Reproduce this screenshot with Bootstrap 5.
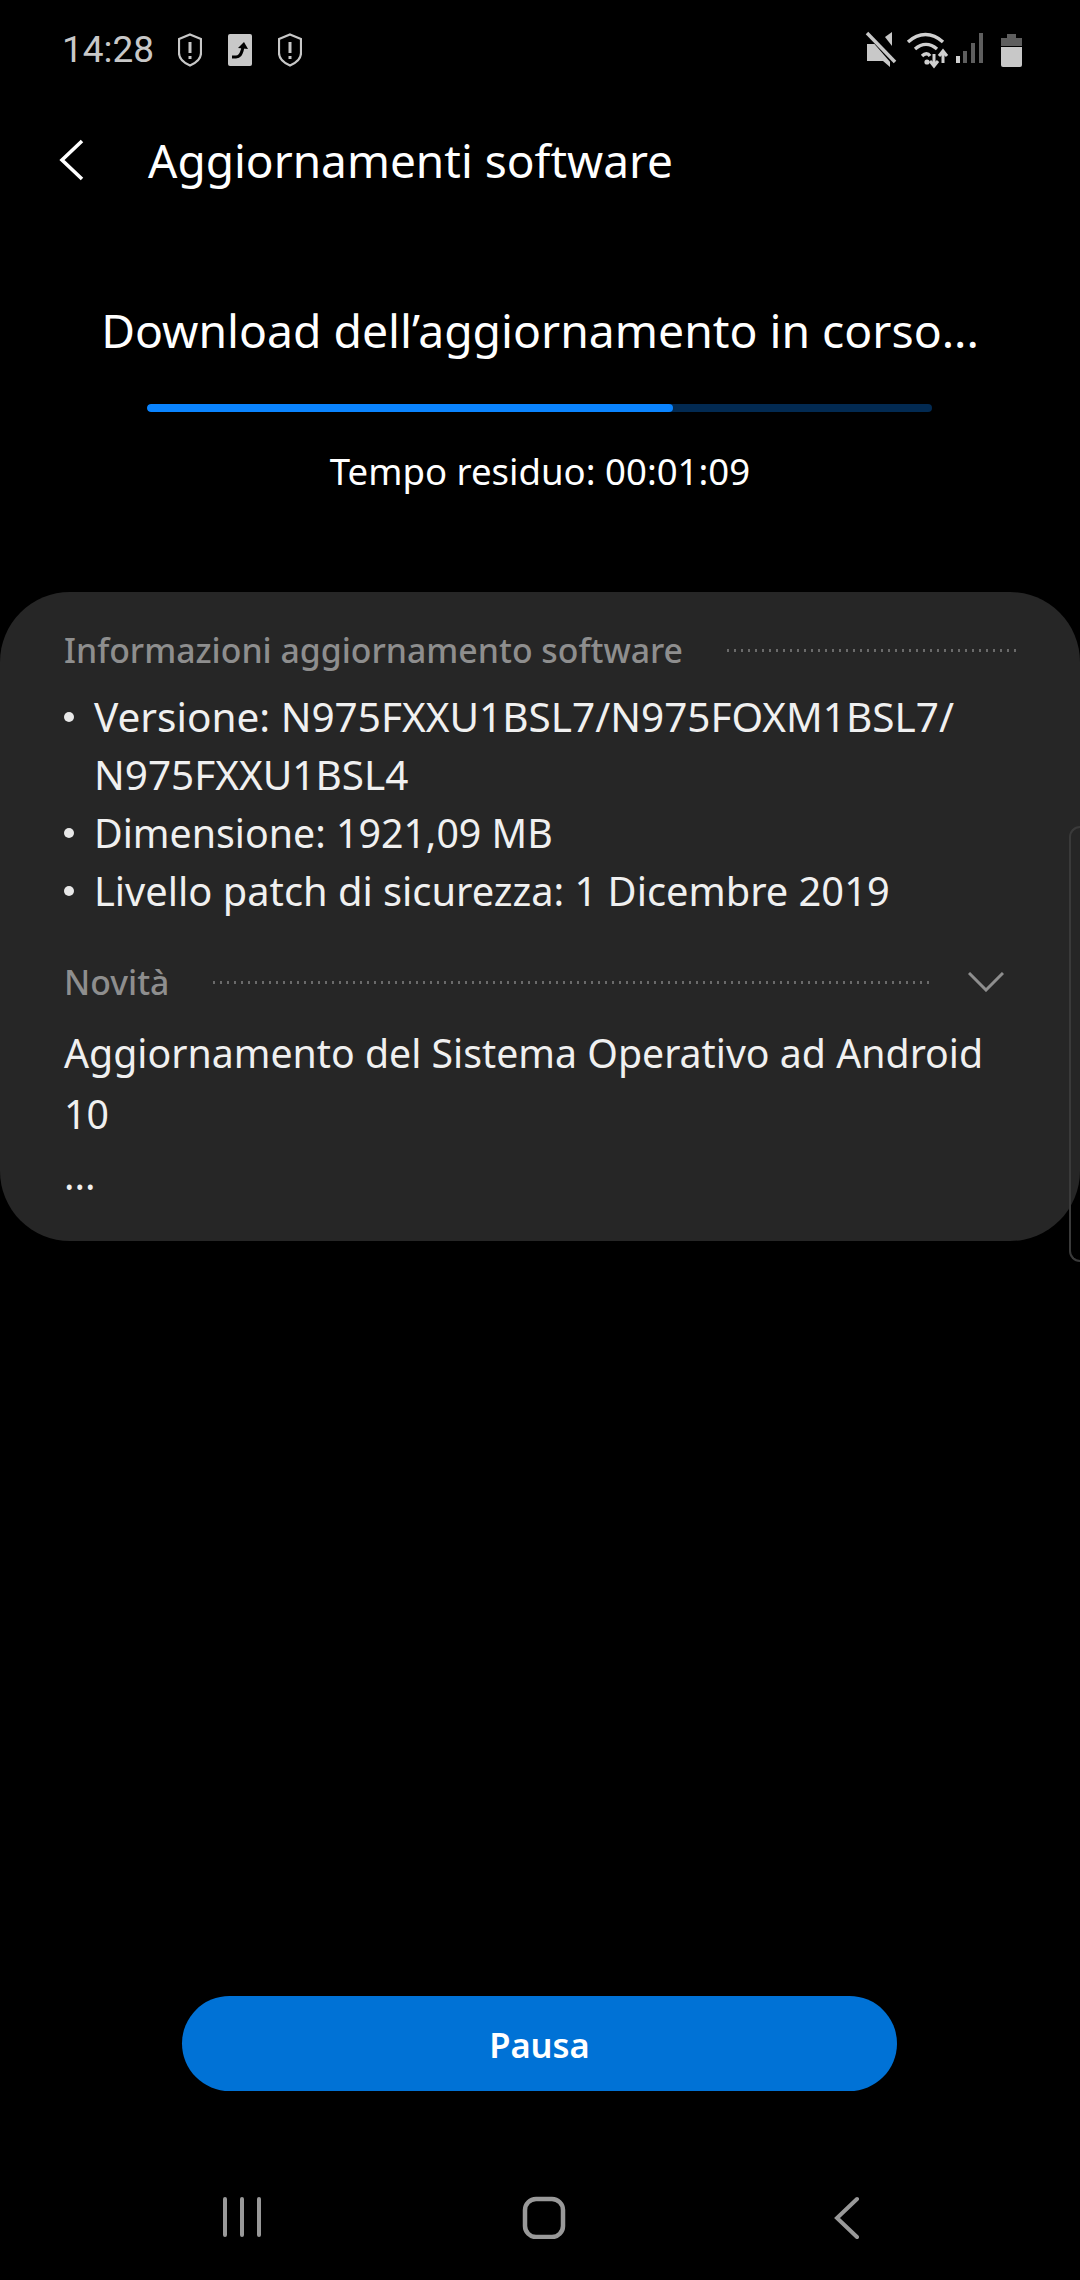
<!DOCTYPE html>
<html lang="it">

<head>
    <meta charset="UTF-8">
    <meta name="viewport" content="width=device-width, initial-scale=1">
    <title>Aggiornamenti software</title>
    <link href="https://cdn.jsdelivr.net/npm/bootstrap@5.3.3/dist/css/bootstrap.min.css" rel="stylesheet">
    <style>
        body {
            background: #000;
            color: #fff;
            font-family: "Noto Sans", sans-serif;
        }

        .phone-screen {
            height: 2280px;
            position: relative;
            overflow: hidden;
        }

        .status-row {
            height: 100px;
            padding: 0 58px 0 62px;
            color: #c8c8c8;
        }

        .status-time {
            font-family: Roboto, sans-serif;
            font-size: 37px;
            width: 116px;
        }

        .status-gap {
            gap: 26px;
        }

        .title-row {
            height: 120px;
            padding-left: 58px;
        }

        .title-text {
            font-size: 46px;
            line-height: 60px;
            margin: 0 0 0 64px;
            font-weight: 400;
        }

        .dl-title {
            font-size: 46.3px;
            line-height: 60px;
            margin: 81px 0 0;
            font-weight: 400;
        }

        .dl-progress {
            width: 785px;
            height: 8px;
            margin: 43px 0 0 147px;
            background: #022a52;
            border-radius: 4px;
        }

        .dl-progress .progress-bar {
            background: #0a84ff;
            border-radius: 4px;
        }

        .dl-time {
            font-size: 36.6px;
            line-height: 50px;
            margin: 34px 0 0;
        }

        .info-panel {
            background: #262626;
            border: 0;
            border-radius: 70px;
            margin-top: 96px;
            height: 649px;
            padding: 33px 64px 0;
            color: #f0f0f0;
        }

        .info-label {
            font-size: 33.8px;
            line-height: 50px;
            color: #8e8e8e;
            font-weight: 500;
        }

        .dot-line {
            height: 3px;
            margin-left: 44px;
            background-image: repeating-linear-gradient(90deg, #6a6a6a 0 2px, transparent 2px 7px);
        }

        .info-list {
            font-size: 39.8px;
            line-height: 58px;
            margin: 13px 0 0;
        }

        .info-list li {
            padding-left: 30px;
            position: relative;
        }

        .info-list .item-version {
            font-size: 40.5px;
        }

        .info-list .item-size {
            font-size: 39.3px;
        }

        .info-list li::before {
            content: "";
            position: absolute;
            left: 0;
            top: 24px;
            width: 10px;
            height: 10px;
            border-radius: 50%;
            background: #e8e8e8;
        }

        .news-row {
            margin-top: 37px;
        }

        .news-arrow {
            margin: 0 12px 0 38px;
        }

        .news-text {
            font-size: 39.25px;
            line-height: 61px;
            margin: 16px 0 0;
        }

        .panel-scroll {
            position: absolute;
            right: 0;
            top: 826px;
            width: 11px;
            height: 436px;
            border: 2px solid #3a3a3a;
            border-right: 0;
            border-radius: 11px 0 0 11px;
        }

        .pause-btn {
            display: block;
            width: 715px;
            height: 95px;
            margin: 0 0 95px 182px;
            padding-top: 8px;
            background: #0072d6;
            border: 0;
            color: #fff;
            font-size: 34.5px;
            font-weight: 600;
        }

        .nav-row {
            height: 94px;
            padding-bottom: 52px;
        }

        .nav-row svg {
            position: absolute;
            top: 2195px;
        }
    </style>
</head>

<body>
    <div class="phone-screen d-flex flex-column">
        <div class="status-row d-flex align-items-center">
            <span class="status-time">14:28</span>
            <div class="d-flex align-items-center status-gap">
                <svg width="24" height="34" viewBox="0 0 24 34" fill="none" stroke="#c8c8c8" stroke-width="2.2">
                    <path d="M12 1.5 23 6v14c0 6-5 10-11 12.5C6 30 1 26 1 20V6Z" />
                    <path d="M12 9v11M12 23v3" stroke-width="3" />
                </svg>
                <svg width="24" height="32" viewBox="0 0 24 32">
                    <rect width="24" height="32" rx="2" fill="#c8c8c8" />
                    <path d="M4 23h4c4 0 5-3 6-6l1-4" fill="none" stroke="#000" stroke-width="3" />
                    <path d="M10 14l6-6 4 7Z" fill="#000" />
                </svg>
                <svg width="24" height="34" viewBox="0 0 24 34" fill="none" stroke="#c8c8c8" stroke-width="2.2">
                    <path d="M12 1.5 23 6v14c0 6-5 10-11 12.5C6 30 1 26 1 20V6Z" />
                    <path d="M12 9v11M12 23v3" stroke-width="3" />
                </svg>
            </div>
            <div class="ms-auto d-flex align-items-center">
                <svg width="120" height="40" viewBox="0 0 120 40" fill="none">
                    <path d="M2 14h8l3-3 12 17v9l-7-6H2Z" fill="#c8c8c8" />
                    <path d="M20 7l7-5v14Z" fill="#c8c8c8" />
                    <path d="M3 2l27 31" stroke="#000" stroke-width="6" />
                    <path d="M2 3l28 29" stroke="#c8c8c8" stroke-width="3.5" />
                    <path d="M43 12c11-10 24-10 35 0M50 19c7-6 15-6 22 0M57 26c3-3 6-3 8 0" stroke="#d0d0d0" stroke-width="3.4" />
                    <circle cx="62" cy="32" r="2.6" fill="#d0d0d0" />
                    <path d="M69 24v12M65 31l4 5 4-5" stroke="#d0d0d0" stroke-width="3" />
                    <path d="M78 33V21M74 26l4-5 4 5" stroke="#d0d0d0" stroke-width="3" />
                    <path d="M93 26v7" stroke="#d0d0d0" stroke-width="4" />
                    <path d="M100 21v12M108 13v20M116 3v30" stroke="#5e5e5e" stroke-width="4" />
                </svg>
                <svg class="ms-3" width="21" height="33" viewBox="0 0 21 33">
                    <path d="M6 0h9v4h6v8H0V4h6Z" fill="#5e5e5e" />
                    <path d="M0 13h21v18a2 2 0 0 1-2 2H2a2 2 0 0 1-2-2Z" fill="#c8c8c8" />
                </svg>
            </div>
        </div>

        <div class="title-row d-flex align-items-center">
            <svg width="26" height="42" viewBox="0 0 26 42" fill="none" stroke="#fff" stroke-width="3.6">
                <path d="M24 2 4 21l20 19" />
            </svg>
            <h1 class="title-text">Aggiornamenti software</h1>
        </div>

        <h2 class="dl-title text-center">Download dell’aggiornamento in corso...</h2>
        <div class="progress dl-progress">
            <div class="progress-bar" style="width: 67%"></div>
        </div>
        <p class="dl-time text-center">Tempo residuo: 00:01:09</p>

        <div class="card info-panel">
            <div class="d-flex align-items-center">
                <span class="info-label">Informazioni aggiornamento software</span>
                <span class="dot-line flex-grow-1"></span>
            </div>
            <ul class="list-unstyled info-list mb-0">
                <li class="item-version">Versione: N975FXXU1BSL7/N975FOXM1BSL7/ N975FXXU1BSL4</li>
                <li class="item-size">Dimensione: 1921,09 MB</li>
                <li>Livello patch di sicurezza: 1 Dicembre 2019</li>
            </ul>
            <div class="d-flex align-items-center news-row">
                <span class="info-label">Novità</span>
                <span class="dot-line flex-grow-1"></span>
                <svg class="news-arrow" width="36" height="20" viewBox="0 0 36 20" fill="none" stroke="#8e8e8e" stroke-width="3">
                    <path d="M1 1l17 17L35 1" />
                </svg>
            </div>
            <p class="news-text">Aggiornamento del Sistema Operativo ad Android 10<br>...</p>
        </div>
        <div class="panel-scroll"></div>

        <div class="mt-auto">
            <button class="btn rounded-pill pause-btn">Pausa</button>
            <div class="nav-row">
                <svg style="left: 222px" width="40" height="42" viewBox="0 0 40 42" stroke="#999" stroke-width="4" stroke-linecap="round">
                    <path d="M3 4v36M20 4v36M37 4v36" />
                </svg>
                <svg style="left: 522px" width="44" height="44" viewBox="0 0 44 44" fill="none" stroke="#999" stroke-width="4.5">
                    <rect x="3" y="4" width="38" height="38" rx="11" />
                </svg>
                <svg style="left: 834px" width="26" height="44" viewBox="0 0 26 44" fill="none" stroke="#999" stroke-width="4" stroke-linecap="round">
                    <path d="M23 4 3 23l20 19" />
                </svg>
            </div>
        </div>
    </div>
    <script src="https://cdn.jsdelivr.net/npm/bootstrap@5.3.3/dist/js/bootstrap.bundle.min.js"></script>
</body>

</html>
